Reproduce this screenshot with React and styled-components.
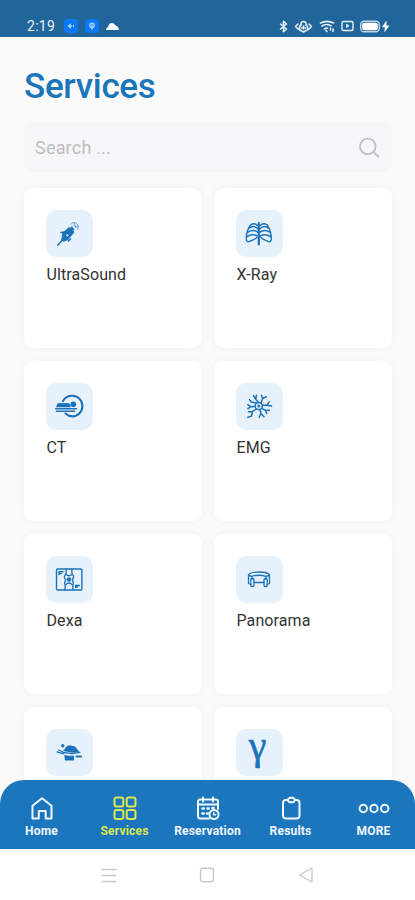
import React from 'react';
import styled, { createGlobalStyle } from 'styled-components';

const GlobalStyle = createGlobalStyle`
    * { box-sizing: border-box; }

    body {
        margin: 0;
        background: #fff;
        font-family: Roboto, 'Liberation Sans', sans-serif;
    }

    svg { display: block; flex-shrink: 0; }
`

const Screen = styled.div`
    display: flex;
    flex-direction: column;
    width: 415px;
    height: 900px;
    overflow: hidden;
    background: #fafafa;
`

const StatusBar = styled.header`
    display: flex;
    justify-content: space-between;
    flex-shrink: 0;
    height: 37px;
    padding: 15px 25px 0 27px;
    background: #20669b;
    color: #e9f1f8;
`

const StatusGroup = styled.div`
    display: flex;
    align-items: center;
    height: 22px;
    gap: ${props => props.$gap || 7}px;
`

const Clock = styled.span`
    font-size: 14px;
    line-height: 22px;
    letter-spacing: .3px;
    margin-right: 2px;
`

const AppBadge = styled.span`
    display: flex;
    align-items: center;
    justify-content: center;
    width: 14px;
    height: 14px;
    border-radius: 4px;
    background: #0b78f5;
    color: #a9d3ff;
`

const Main = styled.main`
    flex: 1;
    min-height: 0;
    overflow: hidden;
    padding: 28px 23px 0 24px;
`

const Title = styled.h1`
    margin: 0;
    color: #1a75bb;
    font-size: 35px;
    font-weight: 500;
    line-height: 44px;
    letter-spacing: -.3px;
`

const SearchBox = styled.div`
    display: flex;
    align-items: center;
    justify-content: space-between;
    height: 49px;
    margin-top: 14px;
    padding: 0 12px 0 11px;
    border-radius: 8px;
    background: #f6f6f9;
    color: #bdbdc0;
`

const SearchInput = styled.span`
    font-size: 18px;
    line-height: 24px;
    letter-spacing: .2px;
`

const Grid = styled.div`
    display: grid;
    grid-template-columns: 1fr 1fr;
    grid-auto-rows: 160px;
    gap: 13px 12px;
    margin-top: 16px;
`

const Card = styled.div`
    padding: 22px;
    border-radius: 9px;
    background: #fff;
    box-shadow: 0 0 10px rgba(0, 0, 0, .035);
`

const IconTile = styled.div`
    display: flex;
    align-items: center;
    justify-content: center;
    width: 47px;
    height: 47px;
    border-radius: 10px;
    background: #e7f1fb;
    color: #1b72b8;
`

const GammaMark = styled.span`
    font-family: 'Liberation Serif', serif;
    font-size: 40px;
    line-height: 40px;
    margin: -14px 4px 0 0;
    -webkit-text-stroke: .6px currentColor;
`

const CardLabel = styled.div`
    margin: 8px 0 0 .5px;
    color: #333;
    font-size: 16px;
    line-height: 20px;
    letter-spacing: .1px;
`

const TabBar = styled.nav`
    display: grid;
    grid-template-columns: repeat(5, 1fr);
    flex-shrink: 0;
    position: relative;
    height: 69px;
    margin-top: -24px;
    border-radius: 24px 24px 0 0;
    background: #1b76bd;
`

const Tab = styled.div`
    display: flex;
    flex-direction: column;
    align-items: center;
    padding-top: 16px;
    color: ${props => props.$active ? '#dbe94f' : '#f2f8fd'};
`

const TabLabel = styled.span`
    margin-top: 3px;
    font-size: 12px;
    font-weight: 700;
    line-height: 17px;
    letter-spacing: .2px;
    white-space: nowrap;
`

const SystemBar = styled.footer`
    display: grid;
    grid-template-columns: 1fr 1fr 1fr;
    justify-items: center;
    flex-shrink: 0;
    height: 51px;
    padding: 18px 60px 0;
    background: #fff;
    color: #c9c9c9;
`

const Line = ({ w = 24, h = w, box, sw = 2, children }) => (
    <svg width={w} height={h} viewBox={box || `0 0 ${w} ${h}`} fill="none" stroke="currentColor"
        strokeWidth={sw} strokeLinecap="round" strokeLinejoin="round">
        {children}
    </svg>
)

const Glyph = ({ children, sw = 1.3 }) => <Line w={47} box="0 0 47 47" sw={sw}>{children}</Line>

const UltraSound = () => (
    <Glyph>
        <path d="M11.8 35.2l6-7" strokeWidth="1.5" />
        <path d="M17 23l6-5.5 5 4.5-6 7.5-4.5 1.8-1.5-1.5z" fill="currentColor" strokeWidth="1" />
        <path d="M15 22.5l3-.5M22.5 31l2-2" strokeWidth="1.6" />
        <path d="M22.5 19.5l3.2-2.500 2.300 2.300-2.500 3z" fill="currentColor" strokeWidth="1" />
        <circle cx="21.3" cy="25.3" r="1.2" fill="#a9cdea" stroke="none" />
        <path d="M25 14.2c1-1.7 3.5-2.2 5.3-1s2.6 3.8 1.3 6M27 15.8c1.3-.6 2.7.2 3 1.5M28.3 12.8l1.2 3M32.3 16.5l-2.6.4" strokeWidth=".9" opacity=".6" />
    </Glyph>
)

const XRay = () => (
    <Glyph sw={1.4}>
        <path d="M22.8 13v21.5" strokeWidth="2.2" />
        <path d="M21.500 15.500c-2-2-5-2-7-.5M22 19c-3-3-6.500-3-9.300-.5M22 22.500c-3-3-7.500-2.500-10.800.3M21.500 26c-3.500-2-7.500-1.500-10.900.9M14.500 15c-2.500 3.600-4.200 8.500-4.200 13.500 0 2.800 1.200 3.800 3.500 2.800s5.500-1.800 7-4" />
        <path d="M24.100 15.500c2-2 5-2 7-.5M23.600 19c3-3 6.500-3 9.300-.5M23.600 22.500c3-3 7.500-2.500 10.800.3M24.100 26c3.500-2 7.500-1.500 10.900.9M31.100 15c2.500 3.600 4.200 8.500 4.200 13.500 0 2.800-1.200 3.800-3.500 2.800s-5.500-1.800-7-4" />
    </Glyph>
)

const CT = () => (
    <Glyph>
        <path d="M17 18c2-3.6 5.6-5.3 9.5-5.2 5.7.1 9.9 4.700 9.900 10.200s-4.400 10.400-9.900 10.400c-2.800 0-5-.9-7-2.800" strokeWidth="2.1" />
        <path d="M11.5 20.3l10.5-.3 2.5 1.500v2.700H10z" fill="currentColor" stroke="none" />
        <path d="M9.7 25.700h20.800M10.500 28.300h18" strokeWidth="1.5" />
        <circle cx="27.3" cy="21.2" r="2.8" fill="currentColor" stroke="none" />
    </Glyph>
)

const EMG = () => (
    <Glyph sw={1.5}>
        <circle cx="22.8" cy="23" r="3.6" />
        <circle cx="22.8" cy="23" r=".8" fill="currentColor" />
        <path d="M22 19l-2.5-3-2-3.4M19.7 16l.8-3.800M25 19.500l1.700-4 3.600-1.800M26.700 15.500l-1.200-3.200M26.500 22l4.500.2 2.200-3.300M31 22.200l4.500.8M25.700 25.300l4 2.200 3.700-.3M29.700 27.500l1 3M24 26.500l1 4-1.800 3.800M25 30.500l3 3.300M20.300 25.800l-3.800 2.700-1 4.500-3.600 1.200M16.500 28.500l-4 .3M19 23.500l-4.200.2-3-2M14.800 23.700l-2.800 2M19.800 20l-4.600-1-1.700-2.400" />
    </Glyph>
)

const Dexa = () => (
    <Glyph sw={1.4}>
        <rect x="10.5" y="13" width="25.4" height="21" rx="1.2" />
        <path d="M20 13c.3 3 .8 4-.6 5.600s-1.700 2.200-.2 4.200-1.300 3-.4 5c.9 1.700.2 4.400.2 6.200M26 13c-.3 3-.8 4 .6 5.600s1.700 2.200.2 4.200 1.300 3 .4 5c-.9 1.700-.2 4.400-.2 6.200" />
        <path d="M20 18.500c1.800 1.500 4.200 1.500 6 0M20 28.500c1.800-1.700 4.200-1.700 6 0" />
        <circle cx="23" cy="23.5" r="2.3" fill="currentColor" stroke="none" />
        <path d="M13 15.800h4M13 17.600h2.300M13 15.800v2.700M29.500 29.500h4M29.500 31h2M29.500 29.500v2" />
    </Glyph>
)

const Panorama = () => (
    <Glyph>
        <path d="M12.500 19c.8-1.800 3.200-3 10.500-3s9.700 1.200 10.500 3M12.500 19v8.500l2.300 1M33.500 19v8.500l-2.300 1M16 20.300c4-1.200 10-1.200 14 0M12.800 19.500l3.200.8v3M33.200 19.500l-3.200.8v3M18 26.500h10" />
        <rect x="14.8" y="22.500" width="3.2" height="8" rx="1.3" />
        <rect x="28" y="22.500" width="3.2" height="8" rx="1.3" />
    </Glyph>
)

const Bed = () => (
    <Glyph>
        <path d="M20.500 17.500l3-1.300 5.500 1.300 4.500 5.500-7 .7-9.500-1.700z" fill="currentColor" stroke="none" />
        <circle cx="16.8" cy="16.8" r="1.7" fill="currentColor" stroke="none" />
        <path d="M12.500 21l5 2.300 8.500 1.300 8-1.300M11 22.800l7 2" strokeWidth="1.2" />
        <path d="M18.300 26l4.700.7h5v4.800h-9z" fill="currentColor" stroke="none" />
        <path d="M30.500 27.500H35" strokeWidth="2" />
    </Glyph>
)

const services = [
    { name: 'UltraSound', icon: <UltraSound /> },
    { name: 'X-Ray', icon: <XRay /> },
    { name: 'CT', icon: <CT /> },
    { name: 'EMG', icon: <EMG /> },
    { name: 'Dexa', icon: <Dexa /> },
    { name: 'Panorama', icon: <Panorama /> },
    { icon: <Bed /> },
    { icon: <GammaMark>γ</GammaMark> },
]

const tabs = [
    {
        name: 'Home',
        icon: <Line><path d="M2.500 9.800L12 2.300l9.500 7.500v12.700h-5.800V15H8.800v7.500H2.500z" /></Line>,
    },
    {
        name: 'Services',
        active: true,
        icon: (
            <Line>
                <rect x="1.5" y="1.5" width="8.8" height="9" rx="2" />
                <rect x="13.7" y="1.5" width="8.8" height="9" rx="2" />
                <rect x="1.5" y="14" width="8.8" height="9" rx="2" />
                <rect x="13.7" y="14" width="8.8" height="9" rx="2" />
            </Line>
        ),
    },
    {
        name: 'Reservation',
        icon: (
            <Line>
                <path d="M13 22.500H4.500a2.500 2.500 0 0 1-2.500-2.500V5.500a2 2 0 0 1 2-2h16a2 2 0 0 1 2 2V13M2 8.500h20M7 1.500v4M17 1.500v4" />
                <path d="M6.500 12.500h1.200M11.500 12.500h1.200M16.500 12h1M6.500 17.500h1.200M11 17.500h.8" strokeWidth="2.6" />
                <circle cx="18" cy="18.5" r="4.5" />
                <path d="M17.800 16.800v2h1.700" strokeWidth="1.5" />
            </Line>
        ),
    },
    {
        name: 'Results',
        icon: (
            <Line>
                <path d="M8.500 4H7a3 3 0 0 0-3 3v12.500a3 3 0 0 0 3 3h10.500a3 3 0 0 0 3-3V7a3 3 0 0 0-3-3H16" />
                <path d="M8.500 4l2-2.200h3.700l2 2.200-1.800 2.200h-4.100z" />
            </Line>
        ),
    },
    {
        name: 'MORE',
        icon: (
            <Line w={32} h={24}>
                <circle cx="5.3" cy="12.5" r="3.7" />
                <circle cx="16" cy="12.5" r="3.7" />
                <circle cx="26.7" cy="12.5" r="3.7" />
            </Line>
        ),
    },
]

const App = () => (
    <>
        <GlobalStyle />
        <Screen>
            <StatusBar>
                <StatusGroup>
                    <Clock>2:19</Clock>
                    <AppBadge>
                        <Line w={8} sw={1.3}><path d="M3.500 2.200L1.500 4l2 1.800M3.500 4h1M6.500 3.500v1" /></Line>
                    </AppBadge>
                    <AppBadge>
                        <Line w={8} sw={1.4}><circle cx="4" cy="3.3" r="2.2" /><path d="M4 3v4" /></Line>
                    </AppBadge>
                    <svg width="13" height="9" viewBox="0 0 13 9" fill="#fff">
                        <path d="M0 8q0-2.500 2.200-3.300Q3 1 6 1q2.700 0 3.500 2.500Q12.500 4 13 8z" />
                    </svg>
                </StatusGroup>
                <StatusGroup $gap={6}>
                    <Line w={9} h={13} sw={1.5}><path d="M1.500 4l6 5-3 2.700V1.300l3 2.700-6 5" /></Line>
                    <Line w={19} h={13} sw={1.5}>
                        <path d="M4 4L1.500 6.500 4 9M15 4l2.500 2.500L15 9M7 5.500V4a2.500 2.500 0 0 1 5 0v1.500M6 5.500l-1 4 4.500 2.500L14 9.500l-1-4M9.500 6v3M7.500 8h4" />
                    </Line>
                    <Line w={16} h={13} sw={1.6}>
                        <path d="M1.500 3c4-2 9-2 13 0M3 6c2.500-1.800 6-1.800 9-.3M5.500 9c1-.8 2-1 3-.8M8 11.500l-1-1M11.500 8v2M14 9v2.500" />
                    </Line>
                    <Line w={13} h={12} sw={1.4}>
                        <rect x="1" y="1.5" width="11" height="9" rx="1.5" />
                        <path d="M5.500 4.500v3l2.300-1.500z" fill="currentColor" strokeWidth=".8" />
                    </Line>
                    <svg width="30" height="13" viewBox="0 0 30 13">
                        <rect x=".7" y="1.2" width="18.6" height="10.6" rx="3.5" fill="none" stroke="#c3d6e6" strokeWidth="1.4" />
                        <rect x="2.2" y="2.7" width="15.6" height="7.6" rx="2" fill="#fff" />
                        <path d="M26.500 .5L22 7.300h3l-.8 5.200L29.500 5.500h-3z" fill="#fff" />
                    </svg>
                </StatusGroup>
            </StatusBar>
            <Main>
                <Title>Services</Title>
                <SearchBox>
                    <SearchInput>Search ...</SearchInput>
                    <Line w={22} sw={1.7}>
                        <circle cx="9.8" cy="9.3" r="7.8" />
                        <path d="M15.500 15l5 4.700" />
                    </Line>
                </SearchBox>
                <Grid>
                    {services.map((service, i) => (
                        <Card key={i}>
                            <IconTile>{service.icon}</IconTile>
                            {service.name && <CardLabel>{service.name}</CardLabel>}
                        </Card>
                    ))}
                </Grid>
            </Main>
            <TabBar>
                {tabs.map(tab => (
                    <Tab key={tab.name} $active={tab.active}>
                        {tab.icon}
                        <TabLabel>{tab.name}</TabLabel>
                    </Tab>
                ))}
            </TabBar>
            <SystemBar>
                <Line w={16} sw={1.3}><path d="M1 2.500h14M1 8.500h14M1 14.500h14" /></Line>
                <Line w={16} sw={1.4}><rect x="1.5" y="1.2" width="13" height="13.5" rx="2.5" /></Line>
                <Line w={16} sw={1.3}><path d="M14 1v14L1.500 8z" /></Line>
            </SystemBar>
        </Screen>
    </>
)

export default App
